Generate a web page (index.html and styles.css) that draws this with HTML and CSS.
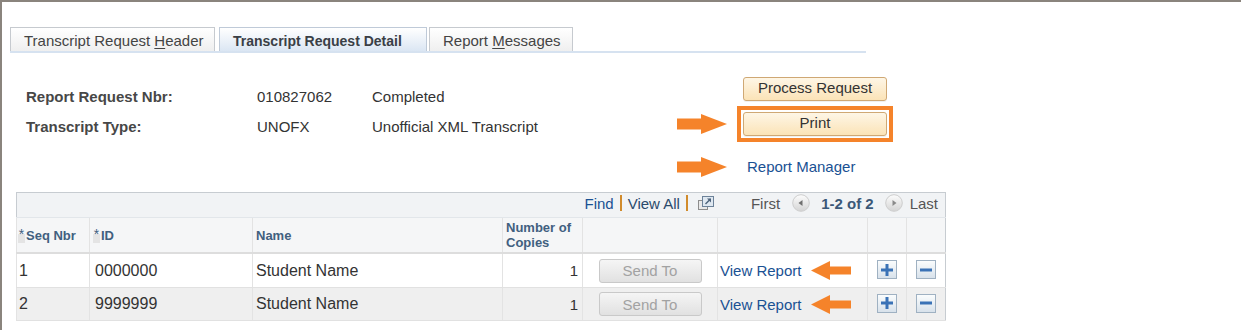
FILE: index.html
```html
<!DOCTYPE html>
<html>
<head>
<meta charset="utf-8">
<link rel="stylesheet" href="styles.css">
</head>
<body>
<div class="page">
  <div class="tabs">
    <div class="tab t1">Transcript Request <u>H</u>eader</div>
    <div class="tab t2 active">Transcript Request Detail</div>
    <div class="tab t3">Report <u>M</u>essages</div>
  </div>

  <div class="top">
    <div class="fields">
      <div class="frow"><span class="lbl">Report Request Nbr:</span><span class="v1">010827062</span><span>Completed</span></div>
      <div class="frow"><span class="lbl">Transcript Type:</span><span class="v1">UNOFX</span><span>Unofficial XML Transcript</span></div>
    </div>
    <div class="actions">
      <button class="btn first-btn">Process Request</button>
      <svg class="arrow-r" width="50" height="20" viewBox="0 0 50 20"><rect x="0" y="4.5" width="25" height="11" fill="#f5832a"/><polygon points="24,0 50,10 24,20" fill="#f5832a"/></svg>
      <div class="hl"><button class="btn">Print</button></div>
      <svg class="arrow-r r3" width="50" height="20" viewBox="0 0 50 20"><rect x="0" y="4.5" width="25" height="11" fill="#f5832a"/><polygon points="24,0 50,10 24,20" fill="#f5832a"/></svg>
      <a class="link rm r3">Report Manager</a>
    </div>
  </div>

  <table class="grid">
    <colgroup>
      <col style="width:73px"><col style="width:163px"><col style="width:250px"><col style="width:80px"><col style="width:135px"><col style="width:150px"><col style="width:39px"><col style="width:39px">
    </colgroup>
    <tr class="navrow">
      <td colspan="8">
        <div class="nav">
          <a class="link">Find</a>
          <span class="sep"></span>
          <span class="viewall">View All</span>
          <span class="sep sep2"></span>
          <svg class="popup" width="18" height="16" viewBox="0 0 18 16">
            <rect x="1.5" y="5.5" width="9" height="9" fill="#e9e9e9" stroke="#8d8d8d"/>
            <rect x="5.5" y="1.5" width="11" height="10" fill="#dfe8f1" stroke="#6d8299"/>
            <path d="M8.5 9 L13.5 4" stroke="#4d627a" stroke-width="1.4"/>
            <polygon points="10,3.5 14,3.5 14,7.5" fill="#4d627a"/>
          </svg>
          <span class="dis firstl">First</span>
          <svg class="circ c1" width="18" height="18" viewBox="0 0 18 18">
            <defs><linearGradient id="cg" x1="0" y1="0" x2="0" y2="1"><stop offset="0" stop-color="#fdfdfd"/><stop offset="1" stop-color="#d4d4d4"/></linearGradient></defs>
            <circle cx="9" cy="9" r="8.3" fill="url(#cg)" stroke="#cdcdcd"/>
            <polygon points="6.5,9 10.5,6 10.5,12" fill="#6f6f6f"/>
          </svg>
          <span class="count">1-2 of 2</span>
          <svg class="circ c2" width="18" height="18" viewBox="0 0 18 18">
            <circle cx="9" cy="9" r="8.3" fill="url(#cg)" stroke="#cdcdcd"/>
            <polygon points="11.5,9 7.5,6 7.5,12" fill="#8a8a8a"/>
          </svg>
          <span class="dis lastl">Last</span>
        </div>
      </td>
    </tr>
    <tr class="hdr">
      <th><span class="req">*</span>Seq Nbr</th>
      <th><span class="req">*</span>ID</th>
      <th>Name</th>
      <th>Number of Copies</th>
      <th></th>
      <th></th>
      <th></th>
      <th></th>
    </tr>
    <tr class="row">
      <td class="seq">1</td>
      <td class="id">0000000</td>
      <td class="name">Student Name</td>
      <td class="num">1</td>
      <td class="ctr"><button class="send">Send To</button></td>
      <td class="vr"><div class="vrin"><a class="link">View Report</a><svg class="arrow-l" width="40" height="19" viewBox="0 0 40 19"><polygon points="0,9.5 19,0 19,19" fill="#f5832a"/><rect x="18" y="5.5" width="22" height="8" fill="#f5832a"/></svg></div></td>
      <td class="ctr"><span class="pm"><svg width="12" height="12" viewBox="0 0 12 12"><rect x="0" y="4.5" width="12" height="3" fill="#3a72b6"/><rect x="4.5" y="0" width="3" height="12" fill="#3a72b6"/></svg></span></td>
      <td class="ctr"><span class="pm"><svg width="12" height="12" viewBox="0 0 12 12"><rect x="0" y="4.5" width="12" height="3" fill="#3a72b6"/></svg></span></td>
    </tr>
    <tr class="row alt">
      <td class="seq">2</td>
      <td class="id">9999999</td>
      <td class="name">Student Name</td>
      <td class="num">1</td>
      <td class="ctr"><button class="send">Send To</button></td>
      <td class="vr"><div class="vrin"><a class="link">View Report</a><svg class="arrow-l" width="40" height="19" viewBox="0 0 40 19"><polygon points="0,9.5 19,0 19,19" fill="#f5832a"/><rect x="18" y="5.5" width="22" height="8" fill="#f5832a"/></svg></div></td>
      <td class="ctr"><span class="pm"><svg width="12" height="12" viewBox="0 0 12 12"><rect x="0" y="4.5" width="12" height="3" fill="#3a72b6"/><rect x="4.5" y="0" width="3" height="12" fill="#3a72b6"/></svg></span></td>
      <td class="ctr"><span class="pm"><svg width="12" height="12" viewBox="0 0 12 12"><rect x="0" y="4.5" width="12" height="3" fill="#3a72b6"/></svg></span></td>
    </tr>
  </table>
</div>
</body>
</html>
```

FILE: styles.css
```css
* { box-sizing: border-box; }
html, body { margin: 0; padding: 0; background: #fff; }
body { font-family: "Liberation Sans", Arial, sans-serif; color: #333; }

.page {
  width: 1241px;
  height: 330px;
  border-top: 2px solid #8a847d;
  border-left: 2px solid #8a847d;
  overflow: hidden;
}

/* tabs */
.tabs {
  display: flex;
  align-items: flex-end;
  margin-left: 8px;
  padding-top: 25px;
  width: 856px;
  border-bottom: 2px solid #d6e2f0;
}
.tab {
  height: 24px;
  line-height: 22px;
  padding-top: 2px;
  font-size: 15px;
  color: #444;
  padding-left: 13px;
  border: 1px solid #c6cacf;
  border-bottom: none;
  background: linear-gradient(#ffffff, #efefef);
  white-space: nowrap;
}
.tab u { text-decoration-thickness: 1px; text-underline-offset: 2px; }
.t1 { width: 205px; margin-right: 4px; }
.t2 { width: 208px; margin-right: 2px; }
.t3 { width: 144px; }
.tab.active {
  font-size: 14px;
  font-weight: bold;
  color: #3a3f46;
  padding-top: 3px;
  line-height: 21px;
  background: linear-gradient(#ffffff, #dbe6f3);
  border-color: #bfcad8;
}

/* top area */
.top {
  display: flex;
  align-items: flex-start;
  padding-left: 24px;
}
.fields {
  width: 651px;
  padding-top: 29px;
}
.frow {
  display: flex;
  height: 30px;
  line-height: 30px;
  font-size: 15px;
  color: #333;
}
.lbl { width: 231px; font-weight: bold; color: #474747; }
.v1 { width: 115px; }

.actions {
  display: grid;
  grid-template-columns: 60px 156px;
  row-gap: 5px;
  padding-top: 24px;
  align-items: center;
}
.btn {
  font-family: "Liberation Sans", Arial, sans-serif;
  font-size: 15px;
  line-height: 20px;
  color: #333;
  width: 144px;
  height: 24px;
  padding: 0 0 2px;
  background: linear-gradient(#fef6e6, #fbe3b7);
  border: 1px solid #cfa874;
  border-radius: 3px;
  box-shadow: 0 1px 0 rgba(0,0,0,0.06);
}
.first-btn { grid-column: 2; margin-left: 6px; }
.hl {
  width: 156px;
  border: 4px solid #f5832a;
  padding: 2px;
}
.arrow-r { display: block; }
.r3 { margin-top: 10px; }
.link { color: #1a5193; text-decoration: none; }
.rm { font-size: 15px; line-height: 20px; margin-left: 10px; }

/* grid */
.grid {
  margin: 15px 0 0 14px;
  width: 930px;
  border-collapse: collapse;
  table-layout: fixed;
  border: 1px solid #c7ccd1;
}
.grid td, .grid th { padding: 0; box-sizing: content-box; }
.navrow td {
  height: 24px;
  background: #f1f3f5;
  border-bottom: 1px solid #e2e6ea;
}
.nav {
  display: flex;
  justify-content: flex-end;
  align-items: center;
  font-size: 15px;
  padding-right: 7px;
  padding-bottom: 4px;
  height: 24px;
}
.sep {
  display: inline-block;
  width: 2px;
  height: 16px;
  background: #d18b2c;
  margin: 0 6px;
}
.sep2 { margin-right: 9px; }
.viewall { color: #2b4a6c; }
.popup { display: block; }
.dis { color: #555; }
.firstl { margin-left: 36px; }
.circ { display: block; }
.c1 { margin-left: 12px; }
.count { margin-left: 11px; font-weight: bold; color: #3b5878; }
.c2 { margin-left: 11px; }
.lastl { margin-left: 7px; }

.hdr th {
  height: 34px;
  background: #f5f6f7;
  border-bottom: 2px solid #dddddd;
  border-left: 1px solid #e3e3e3;
  font-size: 13px;
  line-height: 15px;
  font-weight: bold;
  color: #41607f;
  text-align: left;
  vertical-align: middle;
  padding-left: 3px;
}
.hdr th:first-child { padding-left: 1px; }
.req {
  display: inline-block;
  width: 7px;
  height: 15px;
  vertical-align: top;
  margin-right: 1px;
  font-size: 14px;
  line-height: 12px;
  text-align: center;
  font-weight: normal;
  color: #41607f;
  background: linear-gradient(#f5f6f7 0 40%, #e4e4e4 40%);
}

.row td {
  height: 33px;
  border-bottom: 1px solid #e1e1e1;
  border-left: 1px solid #e3e3e3;
  font-size: 16px;
  vertical-align: middle;
  white-space: nowrap;
}
.row.alt td { background: #efefef; height: 32px; }
.seq { padding-left: 2px !important; }
.id { padding-left: 5px !important; }
.name { padding-left: 3px !important; }
.num { text-align: right; padding-right: 4px !important; font-size: 15px !important; }
.ctr { text-align: center; }
.send {
  font-family: "Liberation Sans", Arial, sans-serif;
  font-size: 15px;
  color: #a2a2a2;
  width: 103px;
  height: 24px;
  padding: 0;
  background: linear-gradient(#f5f5f5, #e1e1e1);
  border: 1px solid #c9c9c9;
  border-radius: 3px;
  vertical-align: middle;
}
.vr { padding-left: 2px !important; }
.vrin { display: flex; align-items: center; font-size: 15px; }
.arrow-l { display: block; margin-left: 10px; }
.pm {
  display: inline-flex;
  align-items: center;
  justify-content: center;
  width: 20px;
  height: 19px;
  border: 1px solid #9fb1c2;
  background: linear-gradient(#fafcfd, #d8e2eb);
  vertical-align: middle;
  margin-top: -3px;
}
.pm svg { display: block; }
```
